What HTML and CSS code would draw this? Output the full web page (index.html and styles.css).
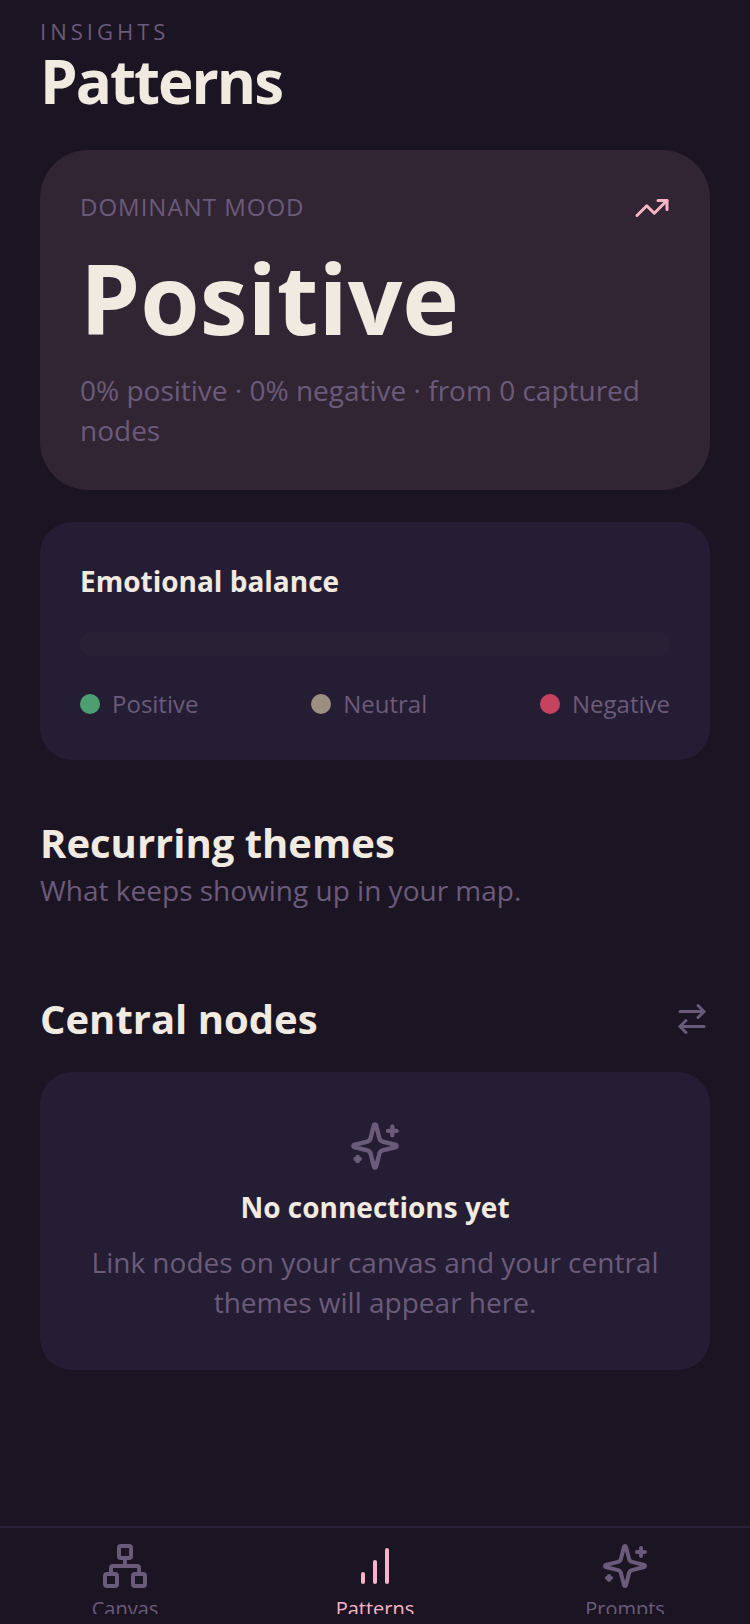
FILE: index.html
```html
<!DOCTYPE html>
<html lang="en">
<head>
<meta charset="UTF-8">
<meta name="viewport" content="width=device-width, initial-scale=1.0">
<title>Patterns</title>
<link rel="stylesheet" href="styles.css">
</head>
<body>
  <main class="page">
    <header class="page-header">
      <p class="eyebrow">INSIGHTS</p>
      <h1>Patterns</h1>
    </header>

    <section class="mood-card">
      <div class="mood-top">
        <span class="mood-label">DOMINANT MOOD</span>
        <svg class="icon icon-small icon-pink" viewBox="0 0 24 24">
          <path d="M22 7l-8.500 8.500-5-5L2 17"/>
          <path d="M16 7h6v6"/>
        </svg>
      </div>
      <p class="mood-value">Positive</p>
      <p class="body-text">0% positive · 0% negative · from 0 captured nodes</p>
    </section>

    <section class="card balance-card">
      <h3>Emotional balance</h3>
      <div class="balance-bar"></div>
      <ul class="legend">
        <li><span class="dot dot-positive"></span>Positive</li>
        <li><span class="dot dot-neutral"></span>Neutral</li>
        <li><span class="dot dot-negative"></span>Negative</li>
      </ul>
    </section>

    <section class="themes">
      <h2>Recurring themes</h2>
      <p class="body-text">What keeps showing up in your map.</p>
    </section>

    <section class="central">
      <div class="section-top">
        <h2>Central nodes</h2>
        <button type="button" class="swap-btn" aria-label="Swap order">
          <svg class="icon icon-small" viewBox="0 0 24 24">
            <path d="M16 3l4 4-4 4"/>
            <path d="M20 7H4"/>
            <path d="M8 21l-4-4 4-4"/>
            <path d="M4 17h16"/>
          </svg>
        </button>
      </div>
      <div class="card empty-card">
        <svg class="icon icon-large" viewBox="0 0 24 24">
          <path d="M9.937 15.5A2 2 0 0 0 8.5 14.063l-6.135-1.582a.5.5 0 0 1 0-.962L8.5 9.936A2 2 0 0 0 9.937 8.5l1.582-6.135a.5.5 0 0 1 .963 0L14.063 8.5A2 2 0 0 0 15.5 9.937l6.135 1.581a.5.5 0 0 1 0 .964L15.5 14.063a2 2 0 0 0-1.437 1.437l-1.582 6.135a.5.5 0 0 1-.963 0z"/>
          <path d="M20 3v4M22 5h-4"/>
          <path d="M4 17v2M5 18H3"/>
        </svg>
        <h3>No connections yet</h3>
        <p class="body-text">Link nodes on your canvas and your central themes will appear here.</p>
      </div>
    </section>
  </main>

  <nav class="tab-bar">
    <a href="#canvas" class="tab">
      <svg class="icon" viewBox="0 0 24 24">
        <rect x="16" y="16" width="6" height="6" rx="1"/>
        <rect x="2" y="16" width="6" height="6" rx="1"/>
        <rect x="9" y="2" width="6" height="6" rx="1"/>
        <path d="M5 16v-3a1 1 0 0 1 1-1h12a1 1 0 0 1 1 1v3"/>
        <path d="M12 12V8"/>
      </svg>
      <span class="tab-label">Canvas</span>
    </a>
    <a href="#patterns" class="tab active">
      <svg class="icon" viewBox="0 0 24 24">
        <path d="M6 20v-4"/>
        <path d="M12 20V10"/>
        <path d="M18 20V4"/>
      </svg>
      <span class="tab-label">Patterns</span>
    </a>
    <a href="#prompts" class="tab">
      <svg class="icon" viewBox="0 0 24 24">
        <path d="M9.937 15.5A2 2 0 0 0 8.5 14.063l-6.135-1.582a.5.5 0 0 1 0-.962L8.5 9.936A2 2 0 0 0 9.937 8.5l1.582-6.135a.5.5 0 0 1 .963 0L14.063 8.5A2 2 0 0 0 15.5 9.937l6.135 1.581a.5.5 0 0 1 0 .964L15.5 14.063a2 2 0 0 0-1.437 1.437l-1.582 6.135a.5.5 0 0 1-.963 0z"/>
        <path d="M20 3v4M22 5h-4"/>
        <path d="M4 17v2M5 18H3"/>
      </svg>
      <span class="tab-label">Prompts</span>
    </a>
  </nav>
</body>
</html>
```
FILE: styles.css
```css
* {
  box-sizing: border-box;
}
body {
  font-family: "Open Sans", "Noto Sans", sans-serif;
  background-color: #1b1423;
  color: #f1eae0;
  margin: 0;
}
h1, h2, h3, p, ul {
  margin: 0;
  padding: 0;
}
h1 {
  font-size: 60px;
  line-height: 70px;
  font-weight: 700;
  letter-spacing: -2px;
}
h2 {
  font-size: 40px;
  line-height: 54px;
  font-weight: 700;
}
h3 {
  font-size: 28px;
  line-height: 38px;
  font-weight: 700;
}
.page {
  padding: 16px 40px 120px;
}
.page-header {
  margin-bottom: 34px;
}
.eyebrow {
  font-size: 22px;
  line-height: 30px;
  letter-spacing: 4px;
  color: #6b5b7a;
}
.body-text {
  font-size: 28px;
  line-height: 40px;
  color: #6b5b7a;
}

/* Icons */
.icon {
  display: block;
  width: 48px;
  height: 48px;
  fill: none;
  stroke: currentColor;
  stroke-width: 2;
  stroke-linecap: round;
  stroke-linejoin: round;
}
.icon-small {
  width: 36px;
  height: 36px;
}
.icon-large {
  width: 52px;
  height: 52px;
  color: #6b5b7a;
}
.icon-pink {
  color: #f8b4c4;
}

/* Cards */
.mood-card {
  background-color: #312433;
  border-radius: 48px;
  padding: 40px;
  margin-bottom: 32px;
}
.mood-top {
  display: flex;
  justify-content: space-between;
  align-items: flex-start;
}
.mood-label {
  font-size: 24px;
  line-height: 34px;
  letter-spacing: 1px;
  color: #6b5b7a;
}
.mood-value {
  font-size: 96px;
  line-height: 112px;
  font-weight: 700;
  margin: 16px 0;
}
.card {
  background-color: #251d33;
  border-radius: 32px;
}
.balance-card {
  padding: 40px;
}
.balance-bar {
  height: 24px;
  margin: 32px 0;
  border-radius: 12px;
  background-color: #2a2036;
}
.legend {
  display: flex;
  justify-content: space-between;
  list-style: none;
  font-size: 24px;
  line-height: 32px;
  color: #6b5b7a;
}
.legend li {
  display: flex;
  align-items: center;
  gap: 12px;
}
.dot {
  width: 20px;
  height: 20px;
  border-radius: 50%;
}
.dot-positive {
  background-color: #4d9f72;
}
.dot-neutral {
  background-color: #9c8f80;
}
.dot-negative {
  background-color: #c5435f;
}

/* Sections */
.themes {
  margin-top: 56px;
}
.central {
  margin-top: 82px;
}
.section-top {
  display: flex;
  justify-content: space-between;
  align-items: center;
  margin-bottom: 26px;
}
.swap-btn {
  background: none;
  border: none;
  padding: 0;
  color: #6b5b7a;
  cursor: pointer;
}
.empty-card {
  display: flex;
  flex-direction: column;
  align-items: center;
  gap: 16px;
  padding: 48px;
  text-align: center;
}

/* Bottom tabs */
.tab-bar {
  position: fixed;
  left: 0;
  right: 0;
  bottom: 0;
  display: flex;
  padding: 14px 0 10px;
  border-top: 2px solid #2a2138;
  background-color: #1b1423;
}
.tab {
  flex: 1;
  display: flex;
  flex-direction: column;
  align-items: center;
  gap: 4px;
  color: #6b5b7a;
  text-decoration: none;
}
.tab.active {
  color: #f8b4c4;
}
.tab-label {
  height: 20px;
  overflow: hidden;
  font-size: 20px;
  line-height: 30px;
}
```
